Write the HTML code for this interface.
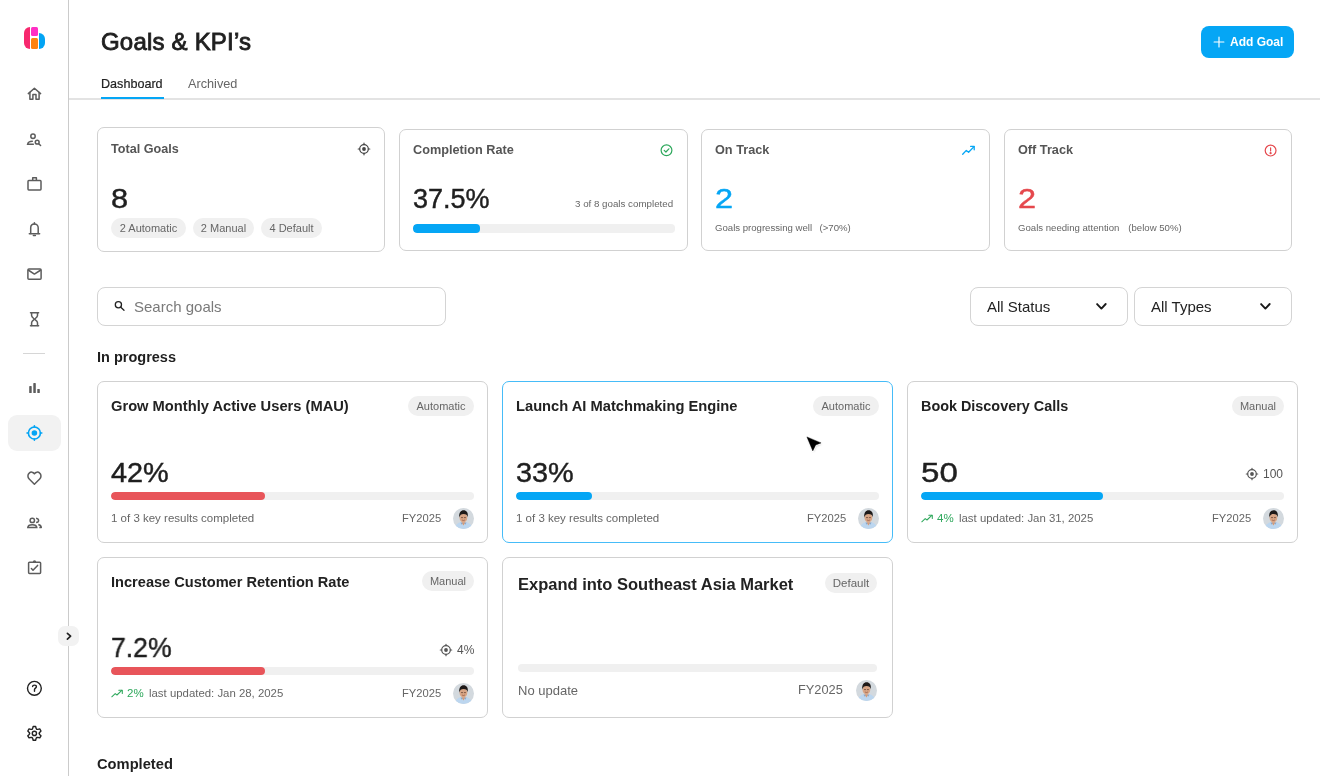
<!DOCTYPE html>
<html><head><meta charset="utf-8">
<style>
*{box-sizing:border-box;margin:0;padding:0}
html,body{width:1320px;height:776px;overflow:hidden;background:#fff;font-family:"Liberation Sans",sans-serif;color:#222}
.a{position:absolute}
.t{position:absolute;white-space:pre;line-height:1;will-change:transform}
.num{-webkit-text-stroke:0.45px currentColor;transform-origin:0 0}
.side{position:absolute;left:0;top:0;width:69px;height:776px;border-right:1px solid #cbcbcb;background:#fff}
.ic{position:absolute;left:22px;width:24px;height:24px}
.ic svg{display:block}
.card{position:absolute;border:1px solid #d1d1d1;border-radius:7px;background:#fff}
.chip{position:absolute;will-change:transform;height:20px;border-radius:10px;background:#f0f0f0;color:#666;font-size:11px;line-height:20px;text-align:center;white-space:pre}
.bar{position:absolute;height:8px;border-radius:4px;background:#f0f0f0;overflow:hidden}
.bar i{position:absolute;left:0;top:0;bottom:0;border-radius:4px}
</style></head><body>

<!-- SIDEBAR -->
<div class="side">
 <!-- logo -->
 <div class="a" style="left:24px;top:27px;width:6px;height:21.5px;background:#f7286e;border-radius:6px 0 0 6px"></div>
 <div class="a" style="left:31px;top:27px;width:6.8px;height:9px;background:#ff2fc4;border-radius:1.5px"></div>
 <div class="a" style="left:31px;top:38px;width:6.8px;height:10.5px;background:#ff8310;border-radius:1.5px"></div>
 <div class="a" style="left:38.7px;top:33px;width:6.5px;height:15.5px;background:#03a4f4;border-radius:0 6.5px 6.5px 0"></div>
 <!-- icons -->
 <svg class="a" style="left:22px;top:82px" width="24" height="24" viewBox="0 0 24 24" fill="none" stroke="#5c5c5c" stroke-width="1.5" stroke-linejoin="round" stroke-linecap="round">
  <path d="M6.3 11.6 L12.4 6.3 L18.6 11.6"/><path d="M7.9 10.4 V17.2 H10.9 V12.5 H14 V17.2 H17.1 V10.4"/></svg>
 <svg class="a" style="left:22px;top:127px" width="24" height="24" viewBox="0 0 24 24" fill="none" stroke="#5c5c5c" stroke-width="1.5" stroke-linecap="round">
  <circle cx="11" cy="9.3" r="2.2"/><path d="M10.3 14.3 C8 14.3 6 15.2 5.6 17.3 H11.3"/><circle cx="15.2" cy="15.2" r="1.9"/><path d="M16.7 16.7 L18.6 18.5"/></svg>
 <svg class="a" style="left:22px;top:172px" width="24" height="24" viewBox="0 0 24 24" fill="none" stroke="#5c5c5c" stroke-width="1.5" stroke-linejoin="round">
  <rect x="6" y="8.6" width="13" height="9.3" rx="0.8"/><path d="M10.7 8.6 V5.8 H14.4 V8.6"/></svg>
 <svg class="a" style="left:22px;top:217px" width="24" height="24" viewBox="0 0 24 24" fill="none" stroke="#5c5c5c" stroke-width="1.5" stroke-linejoin="round" stroke-linecap="round">
  <path d="M8.7 16.6 V10.8 C8.7 8.6 10.3 7 12.4 7 C14.5 7 16.2 8.6 16.2 10.8 V16.6"/><path d="M7.3 16.7 H17.6"/><path d="M12.4 6.9 V5.8"/><path d="M11.4 18.6 H13.4"/></svg>
 <svg class="a" style="left:22px;top:262px" width="24" height="24" viewBox="0 0 24 24" fill="none" stroke="#5c5c5c" stroke-width="1.5" stroke-linejoin="round">
  <rect x="5.9" y="6.9" width="13.2" height="10.4" rx="1"/><path d="M6.2 8 L12.4 12.1 L18.8 8"/></svg>
 <svg class="a" style="left:22px;top:307px" width="24" height="24" viewBox="0 0 24 24" fill="none" stroke="#5c5c5c" stroke-width="1.5" stroke-linecap="round">
  <path d="M8.5 5.7 H16.6 M8.5 18.7 H16.6"/><path d="M9.6 5.9 V8.6 C9.6 10.6 12.4 11.7 12.4 12.2 C12.4 12.7 9.6 13.8 9.6 15.8 V18.5"/><path d="M15.5 5.9 V8.6 C15.5 10.6 12.6 11.7 12.6 12.2 C12.6 12.7 15.5 13.8 15.5 15.8 V18.5"/></svg>
 <div class="a" style="left:23px;top:353px;width:22px;height:1px;background:#d6d6d6"></div>
 <svg class="a" style="left:22px;top:376px" width="24" height="24" viewBox="0 0 24 24" fill="#5c5c5c">
  <rect x="7.2" y="10.1" width="2.5" height="6.9" rx="0.6"/><rect x="11.3" y="7.1" width="2.5" height="9.9" rx="0.6"/><rect x="15.3" y="13" width="2.5" height="4" rx="0.6"/></svg>
 <div class="a" style="left:8px;top:415px;width:53px;height:36px;border-radius:9px;background:#f2f2f2"></div>
 <svg class="a" style="left:22px;top:421px" width="24" height="24" viewBox="0 0 24 24" fill="none" stroke="#03a4f4" stroke-width="1.6" stroke-linecap="round">
  <circle cx="12.4" cy="12" r="6"/><circle cx="12.4" cy="12" r="2.8" fill="#03a4f4" stroke="none"/><path d="M12.4 4.8 V6 M12.4 18 V19.2 M5 12 H6.4 M18.4 12 H19.8"/></svg>
 <svg class="a" style="left:22px;top:466px" width="24" height="24" viewBox="0 0 24 24" fill="none" stroke="#5c5c5c" stroke-width="1.5" stroke-linejoin="round">
  <path d="M12.4 18.2 L7.2 13 C5.5 11.3 5.5 8.6 7.2 7.1 C8.8 5.6 11.2 5.8 12.4 7.8 C13.6 5.8 16.1 5.6 17.7 7.1 C19.4 8.6 19.4 11.3 17.7 13 Z"/></svg>
 <svg class="a" style="left:22px;top:511px" width="24" height="24" viewBox="0 0 24 24" fill="none" stroke="#5c5c5c" stroke-width="1.5">
  <circle cx="10.3" cy="9.4" r="2.2"/><path d="M14.1 7.2 C15.6 7.5 16.6 8.3 16.6 9.4 C16.6 10.5 15.6 11.3 14.1 11.6"/><path d="M5.8 16.6 C6 14.6 8 13.8 10.3 13.8 C12.6 13.8 14.6 14.6 14.8 16.6 Z"/><path d="M16.3 13.6 C18.2 14.1 19.2 15 19.3 16.6 H17.3" stroke-linejoin="round"/></svg>
 <svg class="a" style="left:22px;top:555px" width="24" height="24" viewBox="0 0 24 24" fill="none" stroke="#5c5c5c" stroke-width="1.5" stroke-linejoin="round" stroke-linecap="round">
  <rect x="6.6" y="7.2" width="12" height="11.3" rx="0.9"/><path d="M11.5 7.2 C11.5 5.6 13.5 5.6 13.5 7.2"/><path d="M9.4 13.6 L11 15.3 L15.6 10.4"/></svg>
 <!-- collapse -->
 <div class="a" style="left:58px;top:626px;width:21px;height:20px;border-radius:7px;background:#f2f2f2"></div>
 <svg class="a" style="left:56px;top:624px" width="24" height="24" viewBox="0 0 24 24" fill="none" stroke="#222" stroke-width="1.7" stroke-linecap="round" stroke-linejoin="round">
  <path d="M11.4 9.4 L14.6 12.2 L11.4 15.2"/></svg>
 <svg class="a" style="left:22px;top:676px" width="24" height="24" viewBox="0 0 24 24" fill="none" stroke="#222" stroke-width="1.4" stroke-linecap="round">
  <circle cx="12.4" cy="12.3" r="6.9"/><path d="M10.6 10.6 C10.6 9.5 11.4 9.1 12.5 9.1 C13.6 9.1 14.4 9.8 14.4 10.8 C14.4 12 12.5 12.3 12.5 13.6 V15.3"/></svg>
 <svg class="a" style="left:22px;top:721px" width="24" height="24" viewBox="0 0 24 24" fill="none" stroke="#222" stroke-width="1.4" stroke-linejoin="round">
  <path d="M10.05 8.33 L10.67 7.39 L11.18 5.51 L13.62 5.51 L14.13 7.39 L14.75 8.33 L15.88 8.40 L17.76 7.90 L18.98 10.01 L17.60 11.39 L17.10 12.40 L17.60 13.41 L18.98 14.79 L17.76 16.90 L15.88 16.40 L14.75 16.47 L14.13 17.41 L13.62 19.29 L11.18 19.29 L10.67 17.41 L10.05 16.47 L8.92 16.40 L7.04 16.90 L5.82 14.79 L7.20 13.41 L7.70 12.40 L7.20 11.39 L5.82 10.01 L7.04 7.90 L8.92 8.40 Z"/><circle cx="12.4" cy="12.4" r="2.1"/></svg>
</div>

<!-- HEADER -->
<div class="t" style="left:101px;top:30px;font-size:24px;font-weight:400;letter-spacing:0.2px;-webkit-text-stroke:0.85px #1f1f1f;color:#1f1f1f">Goals &amp; KPI’s</div>
<div class="a" style="left:1201px;top:26px;width:93px;height:31.5px;border-radius:8px;background:#05a6f5"></div>
<svg class="a" style="left:1213px;top:36px" width="12" height="12" viewBox="0 0 12 12" stroke="#fff" stroke-width="1.15" stroke-linecap="round"><path d="M6 1.1 V10.9 M1.1 6 H10.9"/></svg>
<div class="t" style="left:1230px;top:36px;font-size:12px;font-weight:700;color:#fff">Add Goal</div>
<div class="t" style="left:101px;top:78px;font-size:12.6px;color:#222;-webkit-text-stroke:0.2px #222">Dashboard</div>
<div class="t" style="left:188px;top:78px;font-size:12.7px;color:#666">Archived</div>
<div class="a" style="left:69px;top:98px;width:1251px;height:2px;background:#e3e3e3"></div>
<div class="a" style="left:101px;top:97px;width:63px;height:2px;background:#05a6f5"></div>


<!-- STAT CARDS -->
<div class="card" style="left:97px;top:127px;width:288px;height:125px"></div>
<div class="t" style="left:111px;top:143px;font-size:12.6px;font-weight:700;color:#555">Total Goals</div>
<svg class="a" style="left:357px;top:142px" width="14" height="14" viewBox="0 0 14 14" fill="none" stroke="#444" stroke-width="1.2" stroke-linecap="round">
 <circle cx="7" cy="7" r="4.3"/><circle cx="7" cy="7" r="1.9" fill="#444" stroke="none"/><path d="M7 1.2 V2.6 M7 11.4 V12.8 M1.2 7 H2.6 M11.4 7 H12.8"/></svg>
<div class="t num" style="left:111px;top:185px;font-size:28px;color:#1f1f1f;transform:scaleX(1.1)">8</div>
<div class="chip" style="left:111px;top:218px;width:75px">2 Automatic</div>
<div class="chip" style="left:193px;top:218px;width:61px">2 Manual</div>
<div class="chip" style="left:261px;top:218px;width:61px">4 Default</div>

<div class="card" style="left:399px;top:129px;width:289px;height:122px"></div>
<div class="t" style="left:413px;top:144px;font-size:12.7px;font-weight:700;color:#555">Completion Rate</div>
<svg class="a" style="left:659px;top:143px" width="15" height="15" viewBox="0 0 15 15" fill="none" stroke="#2ea85c" stroke-width="1.2" stroke-linecap="round" stroke-linejoin="round">
 <circle cx="7.5" cy="7.3" r="5.4"/><path d="M5.2 7.4 L6.9 9 L9.9 5.8"/></svg>
<div class="t num" style="left:413px;top:186px;font-size:27px;color:#1f1f1f">37.5%</div>
<div class="t" style="left:575px;top:199px;font-size:9.75px;color:#666">3 of 8 goals completed</div>
<div class="bar" style="left:413px;top:224px;width:262px;height:8.6px"><i style="width:67px;background:#05a6f5"></i></div>

<div class="card" style="left:701px;top:129px;width:289px;height:122px"></div>
<div class="t" style="left:715px;top:144px;font-size:12.7px;font-weight:700;color:#555">On Track</div>
<svg class="a" style="left:961px;top:143px" width="15" height="13" viewBox="0 0 15 13" fill="none" stroke="#05a6f5" stroke-width="1.3" stroke-linecap="round" stroke-linejoin="round">
 <path d="M1.7 11.3 L5.3 7.4 L7.6 9.3 L13 3.6"/><path d="M9.6 3.3 H13.2 V6.8"/></svg>
<div class="t num" style="left:715px;top:186px;font-size:27px;color:#05a6f5;transform:scaleX(1.2)">2</div>
<div class="t" style="left:715px;top:223px;font-size:9.6px;color:#666">Goals progressing well<span style="margin-left:7.5px">(&gt;70%)</span></div>

<div class="card" style="left:1004px;top:129px;width:288px;height:122px"></div>
<div class="t" style="left:1018px;top:144px;font-size:12.7px;font-weight:700;color:#555">Off Track</div>
<svg class="a" style="left:1263px;top:143px" width="15" height="15" viewBox="0 0 15 15" fill="none" stroke="#e5484d" stroke-width="1.2" stroke-linecap="round">
 <circle cx="7.6" cy="7.6" r="5.4"/><path d="M7.6 4.9 V8"/><circle cx="7.6" cy="10.2" r="0.5" fill="#e5484d"/></svg>
<div class="t num" style="left:1018px;top:186px;font-size:27px;color:#e5484d;transform:scaleX(1.2)">2</div>
<div class="t" style="left:1018px;top:223px;font-size:9.6px;color:#666">Goals needing attention<span style="margin-left:9px">(below 50%)</span></div>

<!-- SEARCH + FILTERS -->
<div class="card" style="left:97px;top:287px;width:349px;height:38.5px;border-radius:8px;border-color:#d4d4d4"></div>
<svg class="a" style="left:108px;top:294px" width="24" height="24" viewBox="0 0 24 24" fill="none" stroke="#222" stroke-width="1.3" stroke-linecap="round"><circle cx="10.4" cy="10.8" r="3.1"/><path d="M12.8 13.3 L16 16.3"/></svg>
<div class="t" style="left:134px;top:299px;font-size:15px;color:#7a7a7a">Search goals</div>
<div class="card" style="left:970px;top:287px;width:158px;height:39px;border-radius:8px;border-color:#d4d4d4"></div>
<div class="t" style="left:987px;top:299px;font-size:15px;color:#222">All Status</div>
<svg class="a" style="left:1090px;top:294px" width="24" height="24" viewBox="0 0 24 24" fill="none" stroke="#1a1a1a" stroke-width="1.9" stroke-linecap="round" stroke-linejoin="round"><path d="M7.1 10.1 L11.4 14.6 L15.7 10"/></svg>
<div class="card" style="left:1134px;top:287px;width:158px;height:39px;border-radius:8px;border-color:#d4d4d4"></div>
<div class="t" style="left:1151px;top:299px;font-size:15px;color:#222">All Types</div>
<svg class="a" style="left:1254px;top:294px" width="24" height="24" viewBox="0 0 24 24" fill="none" stroke="#1a1a1a" stroke-width="1.9" stroke-linecap="round" stroke-linejoin="round"><path d="M7.1 10.1 L11.4 14.6 L15.7 10"/></svg>

<div class="t" style="left:97px;top:350px;font-size:14.5px;font-weight:700;color:#1f1f1f">In progress</div>

<!-- GOAL CARD 1 -->
<div class="card" style="left:97px;top:381px;width:391px;height:162px"></div>
<div class="t" style="left:111px;top:399px;font-size:14.7px;font-weight:700;color:#222">Grow Monthly Active Users (MAU)</div>
<div class="chip" style="left:408px;top:396px;width:66px">Automatic</div>
<div class="t num" style="left:111px;top:459px;font-size:28px;color:#1f1f1f;transform:scaleX(1.03)">42%</div>
<div class="bar" style="left:111px;top:492px;width:363px"><i style="width:154px;background:#e8555a"></i></div>
<div class="t" style="left:111px;top:513px;font-size:11.5px;color:#666">1 of 3 key results completed</div>
<div class="t" style="left:402px;top:513px;font-size:11.2px;color:#666">FY2025</div>
<svg class="a" style="left:453px;top:508px" width="21" height="21" viewBox="0 0 21 21"><defs><clipPath id="c1"><circle cx="10.5" cy="10.5" r="10.5"/></clipPath></defs><g clip-path="url(#c1)"><rect width="21" height="21" fill="#d3d9de"/><path d="M1.5 21 C2.5 15.8 6 14 10.5 14 C15 14 18.5 15.8 19.5 21 Z" fill="#bcd6ef"/><path d="M8.3 14.2 L10.4 17.5 L12.7 14.2 Z" fill="#d49a78"/><path d="M7.4 14.6 L8.6 16.8 L9.6 15 Z M13.5 14.6 L12.4 16.8 L11.4 15 Z" fill="#86a9cc"/><ellipse cx="10.4" cy="9.8" rx="3.9" ry="4.6" fill="#d8a585"/><path d="M6.3 9.4 C5.7 4.6 8 2.3 10.6 2.3 C13.4 2.3 15.4 4.4 14.8 9.2 C14.3 7.1 13 6 10.5 6 C8.2 6 6.9 7.2 6.3 9.4 Z" fill="#1e1a19"/><path d="M8.4 9.6 H9.6 M11.3 9.6 H12.5" stroke="#5a3a2c" stroke-width="0.7" stroke-linecap="round"/><path d="M9.2 12.2 Q10.45 13 11.7 12.2" stroke="#8a4f3d" stroke-width="0.6" fill="none" stroke-linecap="round"/></g></svg>

<!-- GOAL CARD 2 -->
<div class="card" style="left:502px;top:381px;width:391px;height:162px;border-color:#46bcf8"></div>
<div class="t" style="left:516px;top:399px;font-size:14.7px;font-weight:700;color:#222">Launch AI Matchmaking Engine</div>
<div class="chip" style="left:813px;top:396px;width:66px">Automatic</div>
<div class="t num" style="left:516px;top:459px;font-size:28px;color:#1f1f1f;transform:scaleX(1.03)">33%</div>
<div class="bar" style="left:516px;top:492px;width:363px"><i style="width:76px;background:#05a6f5"></i></div>
<div class="t" style="left:516px;top:513px;font-size:11.5px;color:#666">1 of 3 key results completed</div>
<div class="t" style="left:807px;top:513px;font-size:11.2px;color:#666">FY2025</div>
<svg class="a" style="left:858px;top:508px" width="21" height="21" viewBox="0 0 21 21"><defs><clipPath id="c2"><circle cx="10.5" cy="10.5" r="10.5"/></clipPath></defs><g clip-path="url(#c2)"><rect width="21" height="21" fill="#d3d9de"/><path d="M1.5 21 C2.5 15.8 6 14 10.5 14 C15 14 18.5 15.8 19.5 21 Z" fill="#bcd6ef"/><path d="M8.3 14.2 L10.4 17.5 L12.7 14.2 Z" fill="#d49a78"/><path d="M7.4 14.6 L8.6 16.8 L9.6 15 Z M13.5 14.6 L12.4 16.8 L11.4 15 Z" fill="#86a9cc"/><ellipse cx="10.4" cy="9.8" rx="3.9" ry="4.6" fill="#d8a585"/><path d="M6.3 9.4 C5.7 4.6 8 2.3 10.6 2.3 C13.4 2.3 15.4 4.4 14.8 9.2 C14.3 7.1 13 6 10.5 6 C8.2 6 6.9 7.2 6.3 9.4 Z" fill="#1e1a19"/><path d="M8.4 9.6 H9.6 M11.3 9.6 H12.5" stroke="#5a3a2c" stroke-width="0.7" stroke-linecap="round"/><path d="M9.2 12.2 Q10.45 13 11.7 12.2" stroke="#8a4f3d" stroke-width="0.6" fill="none" stroke-linecap="round"/></g></svg>

<!-- GOAL CARD 3 -->
<div class="card" style="left:907px;top:381px;width:391px;height:162px"></div>
<div class="t" style="left:921px;top:399px;font-size:14.4px;font-weight:700;color:#222">Book Discovery Calls</div>
<div class="chip" style="left:1232px;top:396px;width:52px">Manual</div>
<div class="t num" style="left:921px;top:459px;font-size:28px;color:#1f1f1f;transform:scaleX(1.18)">50</div>
<svg class="a" style="left:1245px;top:467px" width="14" height="14" viewBox="0 0 14 14" fill="none" stroke="#555" stroke-width="1.2" stroke-linecap="round"><circle cx="7" cy="7" r="4.3"/><circle cx="7" cy="7" r="1.9" fill="#555" stroke="none"/><path d="M7 1.3 V2.6 M7 11.4 V12.7 M1.3 7 H2.6 M11.4 7 H12.7"/></svg>
<div class="t" style="left:1263px;top:468px;font-size:12px;color:#555">100</div>
<div class="bar" style="left:921px;top:492px;width:363px"><i style="width:182px;background:#05a6f5"></i></div>
<svg class="a" style="left:921px;top:514px" width="13" height="9" viewBox="0 0 13 9" fill="none" stroke="#2ea85c" stroke-width="1.05" stroke-linecap="round" stroke-linejoin="round"><path d="M0.8 7.8 L4.2 4.6 L6 6 L10.8 1.4"/><path d="M7.8 1.2 H11.3 V4.5"/></svg>
<div class="t" style="left:937px;top:513px;font-size:11.5px;color:#2ea85c">4%</div>
<div class="t" style="left:959px;top:513px;font-size:11.4px;color:#666">last updated: Jan 31, 2025</div>
<div class="t" style="left:1212px;top:513px;font-size:11.2px;color:#666">FY2025</div>
<svg class="a" style="left:1263px;top:508px" width="21" height="21" viewBox="0 0 21 21"><defs><clipPath id="c3"><circle cx="10.5" cy="10.5" r="10.5"/></clipPath></defs><g clip-path="url(#c3)"><rect width="21" height="21" fill="#d3d9de"/><path d="M1.5 21 C2.5 15.8 6 14 10.5 14 C15 14 18.5 15.8 19.5 21 Z" fill="#bcd6ef"/><path d="M8.3 14.2 L10.4 17.5 L12.7 14.2 Z" fill="#d49a78"/><path d="M7.4 14.6 L8.6 16.8 L9.6 15 Z M13.5 14.6 L12.4 16.8 L11.4 15 Z" fill="#86a9cc"/><ellipse cx="10.4" cy="9.8" rx="3.9" ry="4.6" fill="#d8a585"/><path d="M6.3 9.4 C5.7 4.6 8 2.3 10.6 2.3 C13.4 2.3 15.4 4.4 14.8 9.2 C14.3 7.1 13 6 10.5 6 C8.2 6 6.9 7.2 6.3 9.4 Z" fill="#1e1a19"/><path d="M8.4 9.6 H9.6 M11.3 9.6 H12.5" stroke="#5a3a2c" stroke-width="0.7" stroke-linecap="round"/><path d="M9.2 12.2 Q10.45 13 11.7 12.2" stroke="#8a4f3d" stroke-width="0.6" fill="none" stroke-linecap="round"/></g></svg>

<!-- GOAL CARD 4 -->
<div class="card" style="left:97px;top:557px;width:391px;height:161px"></div>
<div class="t" style="left:111px;top:575px;font-size:14.6px;font-weight:700;color:#222">Increase Customer Retention Rate</div>
<div class="chip" style="left:422px;top:571px;width:52px">Manual</div>
<div class="t num" style="left:111px;top:634px;font-size:28px;color:#1f1f1f;transform:scaleX(0.95)">7.2%</div>
<svg class="a" style="left:439px;top:643px" width="14" height="14" viewBox="0 0 14 14" fill="none" stroke="#555" stroke-width="1.2" stroke-linecap="round"><circle cx="7" cy="7" r="4.3"/><circle cx="7" cy="7" r="1.9" fill="#555" stroke="none"/><path d="M7 1.3 V2.6 M7 11.4 V12.7 M1.3 7 H2.6 M11.4 7 H12.7"/></svg>
<div class="t" style="left:457px;top:644px;font-size:12px;color:#555">4%</div>
<div class="bar" style="left:111px;top:667px;width:363px"><i style="width:154px;background:#e8555a"></i></div>
<svg class="a" style="left:111px;top:689px" width="13" height="9" viewBox="0 0 13 9" fill="none" stroke="#2ea85c" stroke-width="1.05" stroke-linecap="round" stroke-linejoin="round"><path d="M0.8 7.8 L4.2 4.6 L6 6 L10.8 1.4"/><path d="M7.8 1.2 H11.3 V4.5"/></svg>
<div class="t" style="left:127px;top:688px;font-size:11.5px;color:#2ea85c">2%</div>
<div class="t" style="left:149px;top:688px;font-size:11.4px;color:#666">last updated: Jan 28, 2025</div>
<div class="t" style="left:402px;top:688px;font-size:11.2px;color:#666">FY2025</div>
<svg class="a" style="left:453px;top:683px" width="21" height="21" viewBox="0 0 21 21"><defs><clipPath id="c4"><circle cx="10.5" cy="10.5" r="10.5"/></clipPath></defs><g clip-path="url(#c4)"><rect width="21" height="21" fill="#d3d9de"/><path d="M1.5 21 C2.5 15.8 6 14 10.5 14 C15 14 18.5 15.8 19.5 21 Z" fill="#bcd6ef"/><path d="M8.3 14.2 L10.4 17.5 L12.7 14.2 Z" fill="#d49a78"/><path d="M7.4 14.6 L8.6 16.8 L9.6 15 Z M13.5 14.6 L12.4 16.8 L11.4 15 Z" fill="#86a9cc"/><ellipse cx="10.4" cy="9.8" rx="3.9" ry="4.6" fill="#d8a585"/><path d="M6.3 9.4 C5.7 4.6 8 2.3 10.6 2.3 C13.4 2.3 15.4 4.4 14.8 9.2 C14.3 7.1 13 6 10.5 6 C8.2 6 6.9 7.2 6.3 9.4 Z" fill="#1e1a19"/><path d="M8.4 9.6 H9.6 M11.3 9.6 H12.5" stroke="#5a3a2c" stroke-width="0.7" stroke-linecap="round"/><path d="M9.2 12.2 Q10.45 13 11.7 12.2" stroke="#8a4f3d" stroke-width="0.6" fill="none" stroke-linecap="round"/></g></svg>

<!-- GOAL CARD 5 -->
<div class="card" style="left:502px;top:557px;width:391px;height:160.5px"></div>
<div class="t" style="left:518px;top:576px;font-size:16.5px;font-weight:700;color:#222">Expand into Southeast Asia Market</div>
<div class="chip" style="left:825px;top:573px;width:52px;font-size:11.5px">Default</div>
<div class="bar" style="left:518px;top:664px;width:359px"></div>
<div class="t" style="left:518px;top:684px;font-size:13px;color:#666">No update</div>
<div class="t" style="left:798px;top:684px;font-size:12.8px;color:#666">FY2025</div>
<svg class="a" style="left:856px;top:680px" width="21" height="21" viewBox="0 0 21 21"><defs><clipPath id="c5"><circle cx="10.5" cy="10.5" r="10.5"/></clipPath></defs><g clip-path="url(#c5)"><rect width="21" height="21" fill="#d3d9de"/><path d="M1.5 21 C2.5 15.8 6 14 10.5 14 C15 14 18.5 15.8 19.5 21 Z" fill="#bcd6ef"/><path d="M8.3 14.2 L10.4 17.5 L12.7 14.2 Z" fill="#d49a78"/><path d="M7.4 14.6 L8.6 16.8 L9.6 15 Z M13.5 14.6 L12.4 16.8 L11.4 15 Z" fill="#86a9cc"/><ellipse cx="10.4" cy="9.8" rx="3.9" ry="4.6" fill="#d8a585"/><path d="M6.3 9.4 C5.7 4.6 8 2.3 10.6 2.3 C13.4 2.3 15.4 4.4 14.8 9.2 C14.3 7.1 13 6 10.5 6 C8.2 6 6.9 7.2 6.3 9.4 Z" fill="#1e1a19"/><path d="M8.4 9.6 H9.6 M11.3 9.6 H12.5" stroke="#5a3a2c" stroke-width="0.7" stroke-linecap="round"/><path d="M9.2 12.2 Q10.45 13 11.7 12.2" stroke="#8a4f3d" stroke-width="0.6" fill="none" stroke-linecap="round"/></g></svg>

<div class="t" style="left:97px;top:757px;font-size:14.7px;font-weight:700;color:#1f1f1f">Completed</div>

<!-- CURSOR -->
<svg class="a" style="left:800px;top:430px" width="30" height="30" viewBox="0 0 30 30"><defs><filter id="sh" x="-50%" y="-50%" width="200%" height="200%"><feGaussianBlur stdDeviation="1.2"/></filter></defs>
<path d="M7.6 8 L21.6 14 L16 16 L13.4 22 Z" fill="#000" opacity="0.3" filter="url(#sh)"/>
<path d="M6.9 6.9 L21.1 12.9 L15.7 15 L12.8 20.9 Z" fill="#fff" stroke="#fff" stroke-width="2.2" stroke-linejoin="round"/>
<path d="M6.9 6.9 L21.1 12.9 L15.7 15 L12.8 20.9 Z" fill="#000" stroke="#000" stroke-width="0.4" stroke-linejoin="round"/></svg>

</body></html>
